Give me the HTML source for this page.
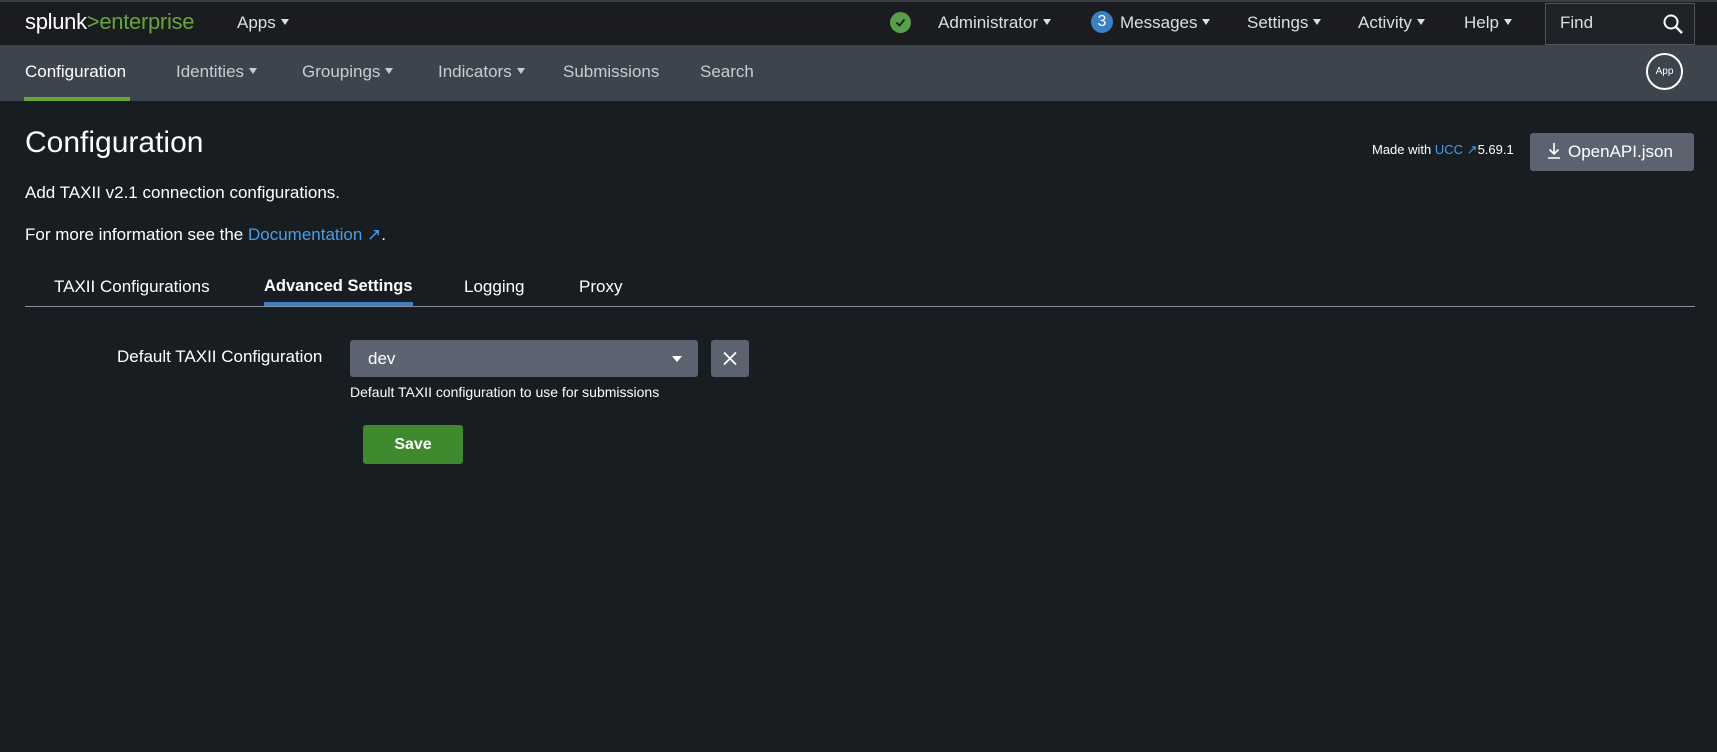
<!DOCTYPE html>
<html><head><meta charset="utf-8"><style>
*{box-sizing:border-box;margin:0;padding:0}
body{width:1717px;height:752px;background:#171d21;font-family:"Liberation Sans",sans-serif;color:#fff;position:relative;overflow:hidden}
.a{position:absolute;white-space:nowrap}
.top{position:absolute;left:0;top:0;width:1717px;height:45px;background:#1a1c20;border-top:2px solid #3a3d42}
.nav{position:absolute;left:0;top:45px;width:1717px;height:56px;background:#3c444d}
.tri{display:inline-block;width:0;height:0;border-left:4.5px solid transparent;border-right:4.5px solid transparent;border-top:6px solid currentColor;margin-left:5px;vertical-align:3px}
.tn{color:#dcdfe3;font-size:17px;top:13px}
.nv{color:#c9cdd2;font-size:17px;top:62px}
</style></head><body>
<div class="top"></div>
<div class="a" style="left:25px;top:9px;font-size:22px;letter-spacing:-0.3px"><span style="color:#fff">splunk</span><span style="color:#65a637">&gt;enterprise</span></div>
<div class="a tn" style="left:237px">Apps<span class="tri"></span></div>
<div class="a" style="left:890px;top:12px;width:21px;height:21px;border-radius:50%;background:#5a9e4b"><svg width="21" height="21"><path d="M6.5 10.5l3 3 5-6" stroke="#1a1c20" stroke-width="1.8" fill="none"/></svg></div>
<div class="a tn" style="left:938px">Administrator<span class="tri"></span></div>
<div class="a" style="left:1091px;top:11px;width:22px;height:22px;border-radius:50%;background:#3c7fc4;font-size:16px;text-align:center;line-height:22px">3</div>
<div class="a tn" style="left:1120px">Messages<span class="tri"></span></div>
<div class="a tn" style="left:1247px">Settings<span class="tri"></span></div>
<div class="a tn" style="left:1358px">Activity<span class="tri"></span></div>
<div class="a tn" style="left:1464px">Help<span class="tri"></span></div>
<div class="a" style="left:1545px;top:3px;width:150px;height:42px;border:1px solid #53575c;background:#1f2226"></div>
<div class="a tn" style="left:1560px">Find</div>
<svg class="a" style="left:1662px;top:13px" width="22" height="22"><circle cx="9" cy="9" r="6.5" stroke="#fff" stroke-width="2" fill="none"/><path d="M14 14l6 6" stroke="#fff" stroke-width="2.4"/></svg>
<div class="nav"></div>
<div class="a nv" style="left:25px;color:#fff">Configuration</div>
<div class="a" style="left:24px;top:97px;width:106px;height:4px;background:#65a637"></div>
<div class="a nv" style="left:176px">Identities<span class="tri"></span></div>
<div class="a nv" style="left:302px">Groupings<span class="tri"></span></div>
<div class="a nv" style="left:438px">Indicators<span class="tri"></span></div>
<div class="a nv" style="left:563px">Submissions</div>
<div class="a nv" style="left:700px">Search</div>
<div class="a" style="left:1646px;top:53px;width:37px;height:37px;border:2px solid #fff;border-radius:50%;font-size:10px;text-align:center;line-height:33px">App</div>
<div class="a" style="left:25px;top:126px;font-size:30px">Configuration</div>
<div class="a" style="left:1372px;top:142px;font-size:13px">Made with <span style="color:#4a9ee8">UCC</span> <span style="color:#4a9ee8">↗</span>5.69.1</div>
<div class="a" style="left:1530px;top:133px;width:164px;height:38px;background:#5c6370;border-radius:3px;font-size:17px;line-height:38px;padding-left:16px"><svg width="16" height="18" style="vertical-align:-3px;margin-right:6px"><path d="M8 1v11M3.5 7.5L8 12l4.5-4.5M2 16h12" stroke="#fff" stroke-width="1.6" fill="none"/></svg>OpenAPI.json</div>
<div class="a" style="left:25px;top:183px;font-size:17px">Add TAXII v2.1 connection configurations.</div>
<div class="a" style="left:25px;top:225px;font-size:17px">For more information see the <span style="color:#4a9ee8">Documentation ↗</span>.</div>
<div class="a" style="left:54px;top:277px;font-size:17px">TAXII Configurations</div>
<div class="a" style="left:264px;top:277px;font-size:16.5px;font-weight:bold">Advanced Settings</div>
<div class="a" style="left:464px;top:277px;font-size:17px">Logging</div>
<div class="a" style="left:579px;top:277px;font-size:17px">Proxy</div>
<div class="a" style="left:25px;top:306px;width:1670px;height:1px;background:#8a9099"></div>
<div class="a" style="left:264px;top:302px;width:149px;height:4px;background:#3c7fc4"></div>
<div class="a" style="left:117px;top:347px;font-size:17px">Default TAXII Configuration</div>
<div class="a" style="left:350px;top:340px;width:348px;height:37px;background:#5c6370;border-radius:3px;font-size:17px;line-height:37px;padding-left:18px">dev</div>
<div class="a" style="left:672px;top:356px;border-left:5px solid transparent;border-right:5px solid transparent;border-top:6px solid #fff"></div>
<div class="a" style="left:711px;top:340px;width:38px;height:37px;background:#5c6370;border-radius:3px"><svg width="38" height="37"><path d="M13 12.5l12 12M25 12.5l-12 12" stroke="#fff" stroke-width="1.8"/></svg></div>
<div class="a" style="left:350px;top:384px;font-size:14px">Default TAXII configuration to use for submissions</div>
<div class="a" style="left:363px;top:425px;width:100px;height:39px;background:#3f8a2f;border-radius:3px;font-size:16px;font-weight:bold;text-align:center;line-height:39px">Save</div>
</body></html>
